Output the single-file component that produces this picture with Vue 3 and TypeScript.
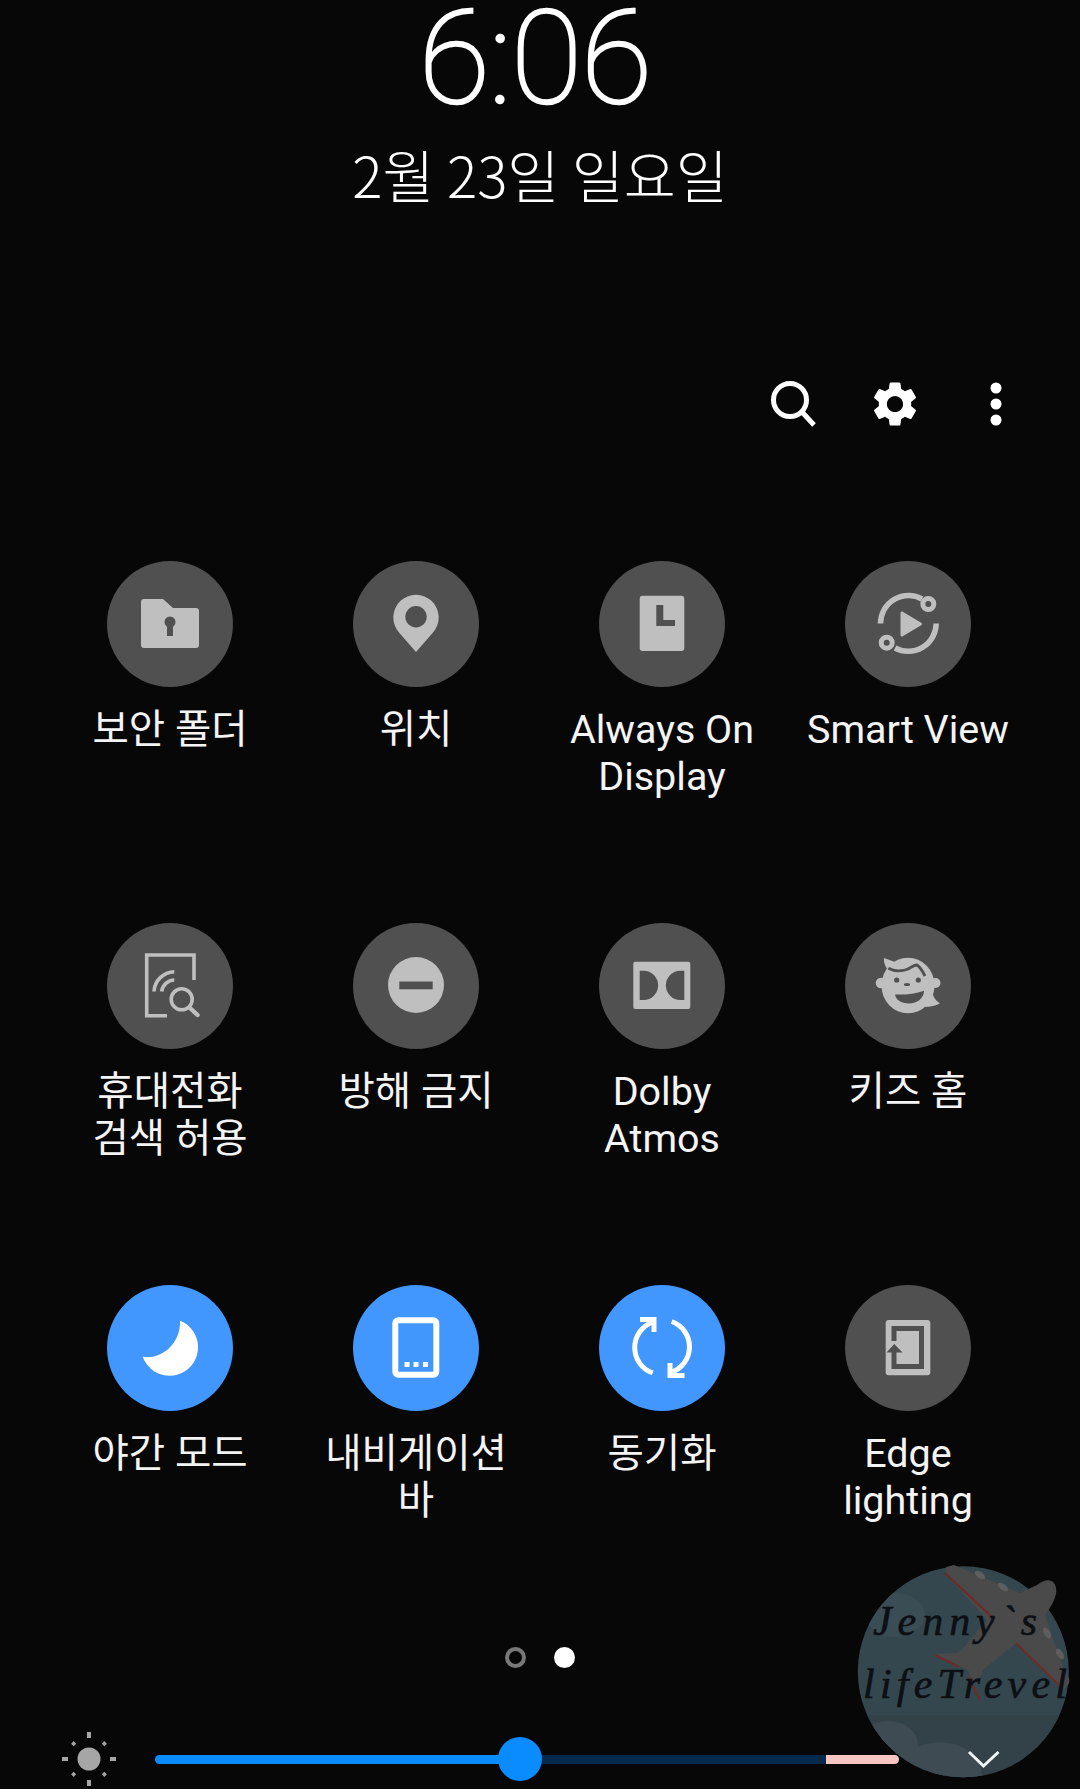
<script setup lang="ts">
interface Tile {
  icon: string
  lines: string[]
  active?: boolean
}

const tiles: Tile[] = [
  { icon: 'folder', lines: ['보안 폴더'] },
  { icon: 'pin', lines: ['위치'] },
  { icon: 'aod', lines: ['Always On', 'Display'] },
  { icon: 'smartview', lines: ['Smart View'] },
  { icon: 'phonesearch', lines: ['휴대전화', '검색 허용'] },
  { icon: 'dnd', lines: ['방해 금지'] },
  { icon: 'dolby', lines: ['Dolby', 'Atmos'] },
  { icon: 'kids', lines: ['키즈 홈'] },
  { icon: 'moon', lines: ['야간 모드'], active: true },
  { icon: 'navbar', lines: ['내비게이션', '바'], active: true },
  { icon: 'sync', lines: ['동기화'], active: true },
  { icon: 'edge', lines: ['Edge', 'lighting'] },
]

const sunRays = [0, 45, 90, 135, 180, 225, 270, 315]
</script>

<template>
  <div class="panel">
    <header class="clock">
      <div class="clock__time">6:06</div>
      <div class="clock__date">2월 23일 일요일</div>
    </header>

    <div class="actions">
      <svg class="actions__icon" viewBox="0 0 54 54">
        <circle cx="23" cy="23" r="16.5" fill="none" stroke="#fff" stroke-width="5" />
        <path d="M35 35 L47 48" fill="none" stroke="#fff" stroke-width="5" />
      </svg>
      <svg class="actions__icon" viewBox="0 0 24 24">
        <path fill="#fff" d="M19.14 12.94c.04-.3.06-.61.06-.94 0-.32-.02-.64-.07-.94l2.03-1.58c.18-.14.23-.41.12-.61l-1.92-3.32c-.12-.22-.37-.29-.59-.22l-2.39.96c-.5-.38-1.03-.7-1.62-.94l-.36-2.54c-.04-.24-.24-.41-.48-.41h-3.84c-.24 0-.43.17-.47.41l-.36 2.54c-.59.24-1.13.57-1.62.94l-2.39-.96c-.22-.08-.47 0-.59.22L2.74 8.87c-.12.21-.08.47.12.61l2.03 1.58c-.05.3-.09.63-.09.94s.02.64.07.94l-2.03 1.58c-.18.14-.23.41-.12.61l1.92 3.32c.12.22.37.29.59.22l2.39-.96c.5.38 1.03.7 1.62.94l.36 2.54c.05.24.24.41.48.41h3.84c.24 0 .44-.17.47-.41l.36-2.54c.59-.24 1.13-.56 1.62-.94l2.39.96c.22.08.47 0 .59-.22l1.92-3.32c.12-.22.07-.47-.12-.61l-2.01-1.58zM12 15.6c-1.98 0-3.6-1.62-3.6-3.6s1.62-3.6 3.6-3.6 3.6 1.62 3.6 3.6-1.62 3.6-3.6 3.6z" />
      </svg>
      <svg class="actions__icon" viewBox="0 0 54 54">
        <circle cx="27" cy="11" r="5.5" fill="#fff" />
        <circle cx="27" cy="27" r="5.5" fill="#fff" />
        <circle cx="27" cy="43" r="5.5" fill="#fff" />
      </svg>
    </div>

    <section class="grid">
      <div v-for="tile in tiles" :key="tile.icon" class="tile">
        <div class="tile__circle" :class="{ 'tile__circle--on': tile.active }">
          <svg class="tile__icon" viewBox="0 0 126 126">
            <g v-if="tile.icon === 'folder'">
              <path class="fg" d="M37 38H56L66 47H89a3 3 0 0 1 3 3V84a3 3 0 0 1-3 3H37a3 3 0 0 1-3-3V41a3 3 0 0 1 3-3Z" />
              <circle class="bg" cx="63" cy="61" r="5.5" />
              <rect class="bg" x="60" y="62" width="6" height="13" />
            </g>
            <g v-else-if="tile.icon === 'pin'">
              <path class="fg" d="M63 91L46 71.5A22.7 22.7 0 1 1 80 71.5Z" />
              <circle class="bg" cx="63" cy="55.7" r="10.7" />
            </g>
            <g v-else-if="tile.icon === 'aod'">
              <rect class="fg" x="40.7" y="34.7" width="44.6" height="55.3" rx="3" />
              <path class="bg" d="M57.3 44H64.3V59H76V65H57.3Z" />
            </g>
            <g v-else-if="tile.icon === 'smartview'">
              <path class="line-fg" stroke-width="5.5" d="M35.5 62.5A28 28 0 0 1 77 38" />
              <path class="line-fg" stroke-width="5.5" d="M91.2 62.5A28 28 0 0 1 50 87" />
              <circle class="line-fg" stroke-width="5" cx="83.3" cy="43" r="5.5" />
              <circle class="line-fg" stroke-width="5" cx="41.7" cy="81.7" r="5.5" />
              <path class="fg fg--round" d="M57 52L75.5 63L57 74Z" />
            </g>
            <g v-else-if="tile.icon === 'phonesearch'">
              <path class="line-fg" stroke-width="3.6" d="M87 57V32H39.7V92.7H60" />
              <path class="line-fg" stroke-width="3.6" d="M47 68.5A21 21 0 0 1 67.3 48.7" />
              <path class="line-fg" stroke-width="3.6" d="M54.7 68.5A13 13 0 0 1 67.3 57" />
              <circle class="line-fg" stroke-width="3.6" cx="74.7" cy="76.3" r="10.5" />
              <path class="line-fg" stroke-width="4.4" stroke-linecap="round" d="M83 85L90.5 92" />
            </g>
            <g v-else-if="tile.icon === 'dnd'">
              <circle class="fg" cx="63" cy="62" r="28" />
              <rect class="bg" x="46.3" y="58.5" width="33.4" height="7.8" />
            </g>
            <g v-else-if="tile.icon === 'dolby'">
              <rect class="fg" x="34.3" y="38.7" width="57" height="47.3" rx="2" />
              <path class="bg" d="M40.7 47.7H44.5A14.6 14.6 0 0 1 44.5 77H40.7Z" />
              <path class="bg" d="M85.3 47.7H81.5A14.6 14.6 0 0 0 81.5 77H85.3Z" />
            </g>
            <g v-else-if="tile.icon === 'kids'">
              <ellipse class="fg" cx="63" cy="62.5" rx="26.5" ry="27.8" />
              <circle class="fg" cx="36" cy="60" r="5.3" />
              <circle class="fg" cx="90.5" cy="60" r="5" />
              <path class="fg" d="M39 35L50 39L44 48C40 44 38.5 39 39 35Z" />
              <path class="fg" d="M87 68C88 74 91 78 95 80.3C91 83 85 84 80 84Z" />
              <path class="line-bg" stroke-width="2.8" d="M43.3 45.3C50 49 56 48 60 47C65 46 68 42 72 42C75 44 78 49 80 53" />
              <circle class="bg" cx="51.7" cy="57" r="2.6" />
              <circle class="bg" cx="73.3" cy="57" r="2.6" />
              <ellipse class="bg" cx="62" cy="61.5" rx="3" ry="1.5" />
              <path class="bg" d="M50 71.5C59 72 70 71 79 67.7C79 75 72 80.5 64 80.5C56 80.5 51 77 50 71.5Z" />
            </g>
            <g v-else-if="tile.icon === 'moon'">
              <path class="fg" d="M73 35.7A28.5 28.5 0 1 1 35.7 71.7C55 75 74 58 73 35.7Z" />
            </g>
            <g v-else-if="tile.icon === 'navbar'">
              <rect class="line-fg" stroke-width="6" x="42.3" y="35.3" width="41" height="54.4" rx="3" />
              <rect class="fg" x="51.5" y="77" width="5" height="5" />
              <rect class="fg" x="60.5" y="77" width="5" height="5" />
              <rect class="fg" x="70" y="77" width="5" height="5" />
            </g>
            <g v-else-if="tile.icon === 'sync'">
              <path class="line-fg" stroke-width="5" d="M53.7 88A27 27 0 0 1 54 37" />
              <path class="line-fg" stroke-width="5" d="M41 34.5H55V47" />
              <path class="line-fg" stroke-width="5" d="M72.7 36.5A27 27 0 0 1 72 87.5" />
              <path class="line-fg" stroke-width="5" d="M71 78V90.5H85.5" />
            </g>
            <g v-else-if="tile.icon === 'edge'">
              <rect class="fg" x="40.7" y="35" width="44.6" height="55.3" rx="3" />
              <path class="line-bg" stroke-width="5" d="M49 56V43.5H76.5V81.5H49V65" />
              <path class="bg" d="M49.3 59L57.5 67.5H41.5Z" />
            </g>
          </svg>
        </div>
        <div class="tile__label">
          <div v-for="line in tile.lines" :key="line">{{ line }}</div>
        </div>
      </div>
    </section>

    <div class="pager">
      <span class="pager__dot" />
      <span class="pager__dot pager__dot--on" />
    </div>

    <div class="brightness">
      <svg class="brightness__sun" viewBox="0 0 56 56">
        <circle cx="28" cy="28" r="11.5" fill="#a6a6a6" />
        <rect
          v-for="deg in sunRays"
          :key="deg"
          :x="deg % 90 === 0 ? 26 : 26.2"
          :y="deg % 90 === 0 ? 1 : 4.5"
          :width="deg % 90 === 0 ? 4 : 3.6"
          :height="deg % 90 === 0 ? 6 : 3.6"
          fill="#a6a6a6"
          :transform="`rotate(${deg} 28 28)`"
        />
      </svg>
      <div class="brightness__track">
        <div class="brightness__fill" style="width: 365px" />
        <div class="brightness__warn" />
        <div class="brightness__thumb" style="left: 365px" />
      </div>
      <svg class="brightness__more" viewBox="0 0 34 20">
        <path d="M2 3L16.5 17L31.5 3" fill="none" stroke="#eef6f8" stroke-width="3" />
      </svg>
    </div>

    <svg class="watermark" viewBox="0 0 240 239">
      <defs>
        <clipPath id="wm-clip"><circle cx="123.3" cy="121.7" r="105.5" /></clipPath>
      </defs>
      <circle cx="123.3" cy="121.7" r="105.5" fill="#34474f" />
      <g clip-path="url(#wm-clip)">
        <rect x="18" y="165" width="212" height="70" fill="#334148" />
        <ellipse cx="48" cy="195" rx="30" ry="24" fill="#3e4b52" />
        <ellipse cx="100" cy="226" rx="42" ry="34" fill="#3e4b52" />
        <ellipse cx="55" cy="65" rx="30" ry="22" fill="#3a4d55" />
      </g>
      <path fill="#4a4a4a" d="M106 17L114 15L180 43L197 35C208 26 218 30 216 44C214 52 210 58 205 65L224 120C232 130 231 134 222 140L176 93L143 120C140 128 138 136 132 132L128 120L95 104L118 103L125 96L147 70L106 24Z" />
      <path fill="none" stroke="#6e2a28" stroke-width="2" d="M105 23L153 68M176 93L222 138M95 105L119 117M128 127L140 150" />
      <g fill="#5e5e5e">
        <ellipse cx="140" cy="25" rx="6" ry="3" transform="rotate(35 140 25)" />
        <ellipse cx="163" cy="37" rx="6" ry="3" transform="rotate(35 163 37)" />
        <ellipse cx="207" cy="83" rx="6" ry="3" transform="rotate(60 207 83)" />
        <ellipse cx="220" cy="104" rx="6" ry="3" transform="rotate(60 220 104)" />
      </g>
      <text class="watermark__text" x="33" y="85" textLength="164">Jenny`s</text>
      <text class="watermark__text" x="23" y="148" textLength="204">lifeTrevel</text>
    </svg>
  </div>
</template>

<style>
html,
body {
  margin: 0;
  background: #070707;
}
</style>

<style scoped>
.panel {
  position: relative;
  width: 1080px;
  height: 1789px;
  overflow: hidden;
  background: #070707;
  color: #fff;
  font-family: Roboto, "Noto Sans CJK KR", sans-serif;
}

.clock {
  display: flex;
  flex-direction: column;
  align-items: center;
  height: 377px;
}

.clock__time {
  height: 118px;
  margin-right: 10px;
  font-size: 130px;
  line-height: 118px;
  font-weight: 100;
  letter-spacing: -1px;
  -webkit-text-stroke: 2.5px #fff;
}

.clock__date {
  margin-top: 20px;
  font-family: "Noto Sans CJK KR", sans-serif;
  font-size: 56.5px;
  line-height: 70px;
  font-weight: 200;
}

.actions {
  display: flex;
  justify-content: flex-end;
  gap: 47px;
  height: 54px;
  padding-right: 57px;
}

.actions__icon {
  width: 54px;
  height: 54px;
}

.grid {
  display: grid;
  grid-template-columns: repeat(4, 246px);
  grid-auto-rows: 238px;
  row-gap: 124px;
  margin-top: 130px;
  padding-left: 47px;
}

.tile {
  display: flex;
  flex-direction: column;
  align-items: center;
  gap: 19px;
}

.tile__circle {
  width: 126px;
  height: 126px;
  border-radius: 50%;
  background: #505050;
  color: #bfbfbf;
  --tile-bg: #505050;
}

.tile__circle--on {
  background: #4297ff;
  color: #fff;
  --tile-bg: #4297ff;
}

.tile__icon {
  display: block;
  width: 126px;
  height: 126px;
}

.fg {
  fill: currentColor;
}

.fg--round {
  stroke: currentColor;
  stroke-width: 3;
  stroke-linejoin: round;
}

.bg {
  fill: var(--tile-bg);
}

.line-fg {
  fill: none;
  stroke: currentColor;
}

.line-bg {
  fill: none;
  stroke: var(--tile-bg);
}

.tile__label {
  font-size: 39.5px;
  line-height: 47px;
  text-align: center;
  white-space: nowrap;
  color: #f4f4f4;
}

.pager {
  display: flex;
  justify-content: center;
  gap: 28px;
  margin-top: 124px;
}

.pager__dot {
  box-sizing: border-box;
  width: 21px;
  height: 21px;
  border: 4px solid #777;
  border-radius: 50%;
}

.pager__dot--on {
  border: 0;
  background: #fff;
}

.brightness {
  position: relative;
  z-index: 1;
  display: flex;
  align-items: center;
  height: 44px;
  margin-top: 69px;
  padding-left: 61px;
}

.brightness__sun {
  width: 56px;
  height: 56px;
  flex: none;
}

.brightness__track {
  position: relative;
  width: 744px;
  height: 9px;
  margin-left: 38px;
  border-radius: 5px;
  background: #04294d;
}

.brightness__fill {
  position: absolute;
  inset: 0 auto 0 0;
  border-radius: 5px 0 0 5px;
  background: #0a8cff;
}

.brightness__warn {
  position: absolute;
  top: 0;
  right: 0;
  bottom: 0;
  width: 73px;
  border-radius: 0 5px 5px 0;
  background: #f8c6c2;
}

.brightness__thumb {
  position: absolute;
  top: 50%;
  width: 44px;
  height: 44px;
  margin: -22px 0 0 -22px;
  border-radius: 50%;
  background: #0a8cff;
}

.brightness__more {
  width: 34px;
  height: 20px;
  margin-left: 68px;
  flex: none;
}

.watermark {
  position: absolute;
  left: 840px;
  top: 1550px;
  width: 240px;
  height: 239px;
}

.watermark__text {
  font-family: "Liberation Serif", serif;
  font-style: italic;
  font-size: 42px;
  fill: #0c1014;
  stroke: #0c1014;
  stroke-width: 0.6;
}
</style>
